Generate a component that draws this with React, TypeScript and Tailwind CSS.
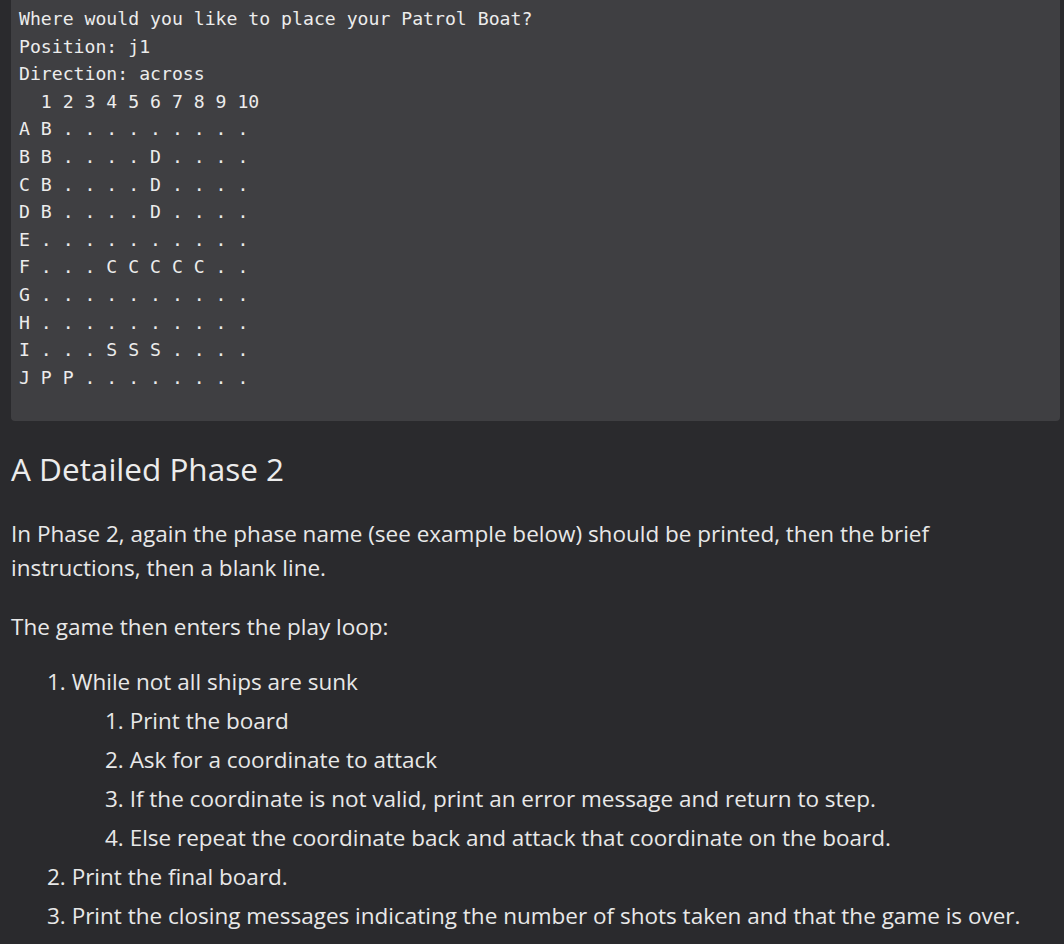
const boardText = `Where would you like to place your Patrol Boat?
Position: j1
Direction: across
  1 2 3 4 5 6 7 8 9 10
A B . . . . . . . . .
B B . . . . D . . . .
C B . . . . D . . . .
D B . . . . D . . . .
E . . . . . . . . . .
F . . . C C C C C . .
G . . . . . . . . . .
H . . . . . . . . . .
I . . . S S S . . . .
J P P . . . . . . . .`;

const subSteps = [
  "Print the board",
  "Ask for a coordinate to attack",
  "If the coordinate is not valid, print an error message and return to step.",
  "Else repeat the coordinate back and attack that coordinate on the board.",
];

const App = () => {
  return (
    <div className="min-h-[944px] w-full bg-[#2a2a2d] text-[#e8e8e8] font-['Open_Sans',sans-serif] overflow-hidden">
      <div className="pl-[11px] pr-[4px]">
        <pre className="bg-[#3f3f42] rounded-b-[4px] pl-[8px] pt-[5px] pb-[30px] font-['DejaVu_Sans_Mono',monospace] text-[18.15px] leading-[27.6px] text-[#ececec]">
          {boardText}
        </pre>

        <h2 className="mt-[28px] text-[31.5px] leading-[40px] font-normal text-[#ececec]">
          A Detailed Phase 2
        </h2>

        <p className="mt-[28px] text-[22.5px] leading-[34px]">
          In Phase 2, again the phase name (see example below) should be printed, then the brief
          instructions, then a blank line.
        </p>

        <p className="mt-[25px] text-[22.5px] leading-[34px]">The game then enters the play loop:</p>

        <ol className="mt-[21px] pl-[36px] text-[22.5px] leading-[34px] list-decimal list-inside flex flex-col gap-[5px]">
          <li>
            While not all ships are sunk
            <ol className="mt-[5px] pl-[58px] list-decimal list-inside flex flex-col gap-[5px]">
              {subSteps.map((s) => (
                <li key={s}>{s}</li>
              ))}
            </ol>
          </li>
          <li>Print the final board.</li>
          <li>Print the closing messages indicating the number of shots taken and that the game is over.</li>
        </ol>
      </div>
    </div>
  );
};

export default App;
